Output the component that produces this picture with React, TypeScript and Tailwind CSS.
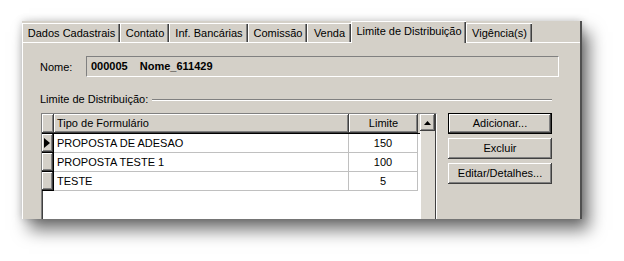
import React from 'react';

const tabs = [
  { label: 'Dados Cadastrais', w: 'w-[98px]' },
  { label: 'Contato', w: 'w-[49px]' },
  { label: 'Inf. Bancárias', w: 'w-[79px]' },
  { label: 'Comissão', w: 'w-[59px]' },
  { label: 'Venda', w: 'w-[44px]' },
  { label: 'Limite de Distribuição', w: 'w-[115px]', active: true },
  { label: 'Vigência(s)', w: 'w-[66px]' },
];

const rows = [
  { tipo: 'PROPOSTA DE ADESAO', limite: '150', current: true },
  { tipo: 'PROPOSTA TESTE 1', limite: '100' },
  { tipo: 'TESTE', limite: '5' },
];

const raised =
  'shadow-[inset_-1px_-1px_#404040,inset_1px_1px_#ffffff,inset_-2px_-2px_#808080]';

const WinButton = ({ label, isDefault }: { label: string; isDefault?: boolean }) => (
  <div
    className={
      'h-[21px] w-[104px] flex items-center justify-center bg-[#d4d0c8] ' +
      (isDefault ? 'border border-black ' : '') +
      raised
    }
  >
    {label}
  </div>
);

const App = () => {
  return (
    <div className="w-[624px] h-[261px] bg-white overflow-hidden pt-[21px] pl-[22px]">
      <div className="w-[560px] h-[198px] bg-[#d4d0c8] flex flex-col overflow-hidden border-r-2 border-r-[#505050] shadow-[0_0_8px_rgba(0,0,0,0.2),7px_11px_16px_rgba(0,0,0,0.55)] font-['Liberation_Sans',Arial,sans-serif] text-[11px] leading-none text-black">
        {/* tabs */}
        <div className="h-[21px] flex items-end shrink-0">
          {tabs.map((t) =>
            t.active ? (
              <div
                key={t.label}
                className={`${t.w} h-[22px] mb-[-1px] relative z-10 bg-[#d4d0c8] flex items-center justify-center pb-[3px] border-t border-l border-white shadow-[inset_-1px_0_#404040,inset_-2px_0_#808080]`}
              >
                {t.label}
              </div>
            ) : (
              <div
                key={t.label}
                className={`${t.w} h-[19px] flex items-center justify-center pt-px border-t border-l border-white shadow-[inset_-1px_0_#404040,inset_-2px_0_#808080]`}
              >
                {t.label}
              </div>
            )
          )}
        </div>

        {/* body */}
        <div className="flex-1 border-t border-l border-white pt-[13px] pl-[17px]">
          <div className="flex items-center h-[21px]">
            <span className="w-[46px] pt-px">Nome:</span>
            <div className="w-[473px] h-[21px] flex items-center gap-[12px] pl-[4px] font-bold border-t border-l border-[#808080] border-b border-r border-b-white border-r-white">
              <span>000005</span>
              <span>Nome_611429</span>
            </div>
          </div>

          <div className="flex items-center mt-[16px] h-[13px] w-[512px]">
            <span className="pr-[4px]">Limite de Distribuição:</span>
            <div className="flex-1 border-t border-[#808080] border-b border-b-white mt-px" />
          </div>

          <div className="flex mt-[7px] ml-px">
            {/* grid */}
            <div className="w-[396px] h-[120px] flex border-t border-l border-[#808080] border-r border-r-white bg-white">
              <div className="w-[378px] flex flex-col">
                {/* header */}
                <div className="flex h-[20px] bg-[#d4d0c8] border-b border-b-black">
                  <div className={`w-[12px] ${raised}`} />
                  <div className={`w-[295px] flex items-center pl-[3px] ${raised}`}>Tipo de Formulário</div>
                  <div className={`w-[69px] flex items-center justify-center ${raised}`}>Limite</div>
                  <div className="flex-1 bg-[#d4d0c8]" />
                </div>
                {rows.map((r) => (
                  <div key={r.tipo} className="flex h-[19px]">
                    <div className={`w-[12px] bg-[#d4d0c8] flex items-center justify-start border-r border-b border-black ${raised}`}>
                      {r.current && (
                        <svg width="6" height="10" viewBox="0 0 6 10" className="ml-[2px]">
                          <path d="M0 0 L6 5 L0 10 Z" fill="#000" />
                        </svg>
                      )}
                    </div>
                    <div className="w-[295px] flex items-center pl-[3px] border-r border-b border-[#c0c0c0]">{r.tipo}</div>
                    <div className="w-[69px] flex items-center justify-center border-r border-b border-[#c0c0c0]">{r.limite}</div>
                  </div>
                ))}
                <div className="flex-1 border-l border-[#404040]" />
              </div>
              {/* scrollbar */}
              <div className="w-[16px] flex flex-col bg-[#d4d0c8] border-r border-[#404040]">
                <div className={`h-[17px] flex items-center justify-center ${raised}`}>
                  <svg width="7" height="4" viewBox="0 0 7 4">
                    <path d="M3.5 0 L7 4 L0 4 Z" fill="#000" />
                  </svg>
                </div>
                <div className="flex-1 border-l border-white bg-[#dcd9d2]" />
              </div>
            </div>

            {/* buttons */}
            <div className="ml-[11px] flex flex-col gap-[4px]">
              <WinButton label="Adicionar..." isDefault />
              <WinButton label="Excluir" />
              <WinButton label="Editar/Detalhes..." />
            </div>
          </div>
        </div>
      </div>
    </div>
  );
};

export default App;
